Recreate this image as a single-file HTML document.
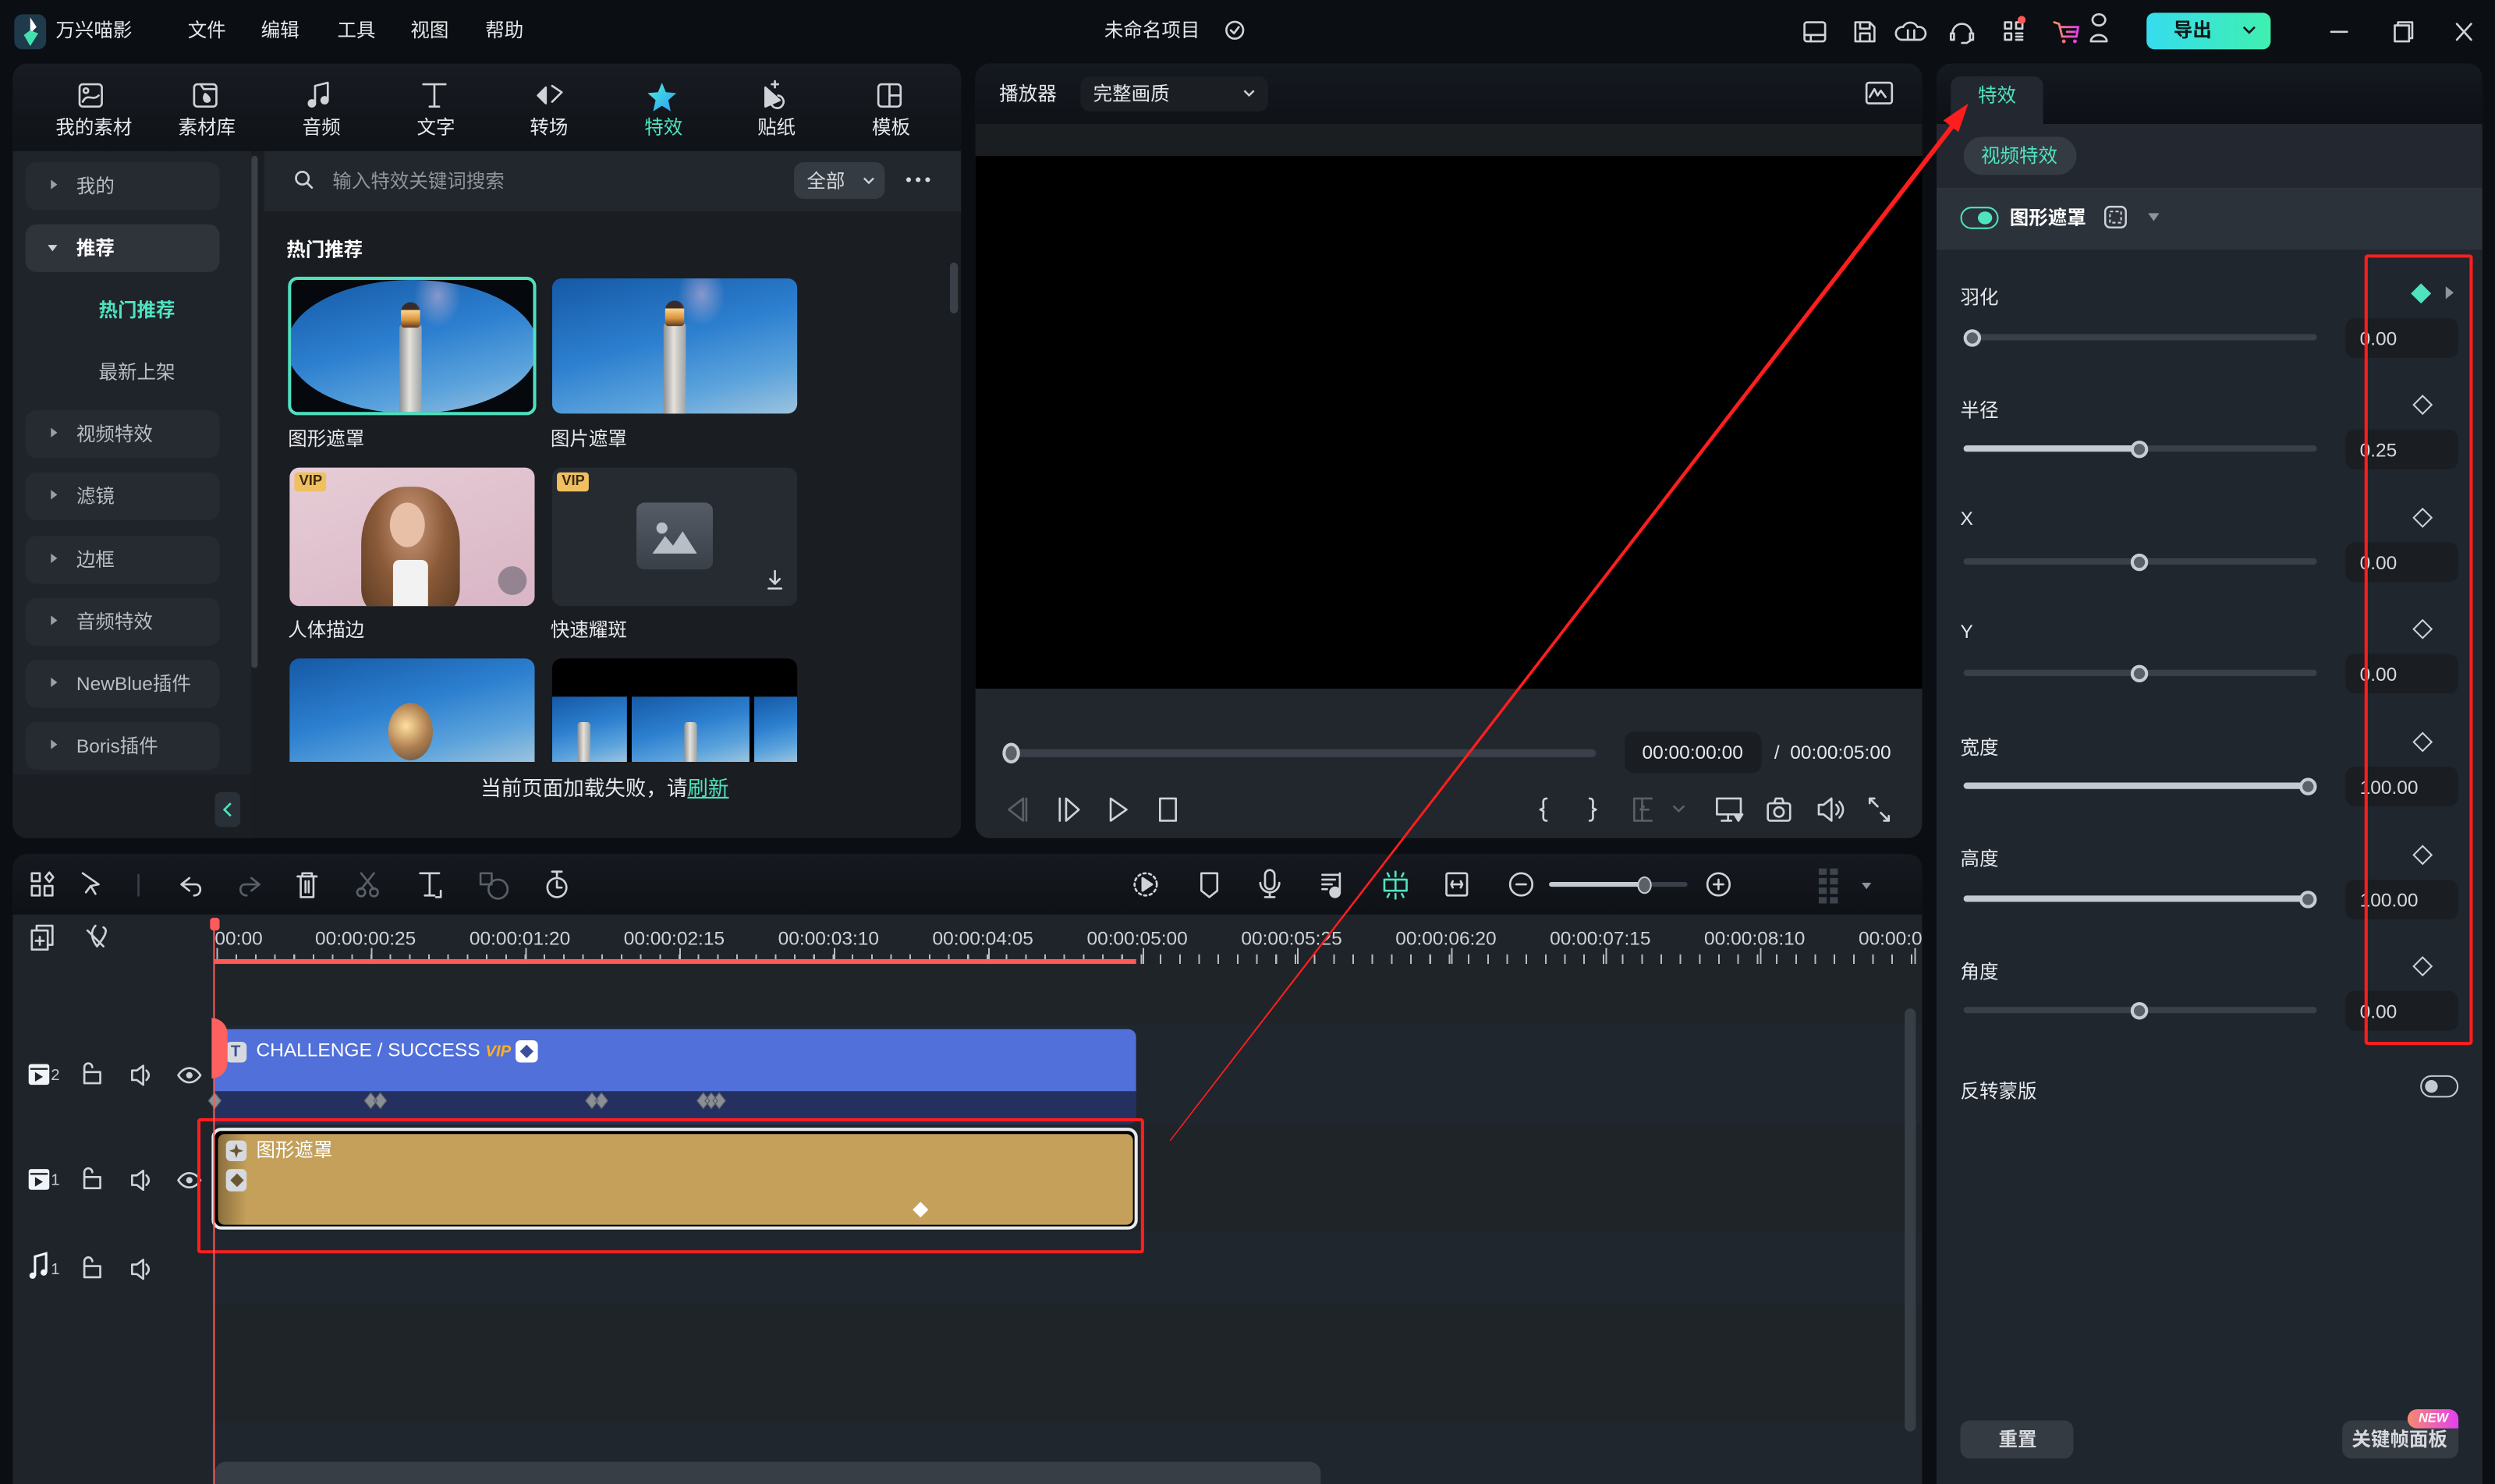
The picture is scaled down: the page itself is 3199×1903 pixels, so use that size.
<!DOCTYPE html>
<html><head><meta charset="utf-8">
<style>
*{margin:0;padding:0;box-sizing:border-box}
html,body{width:3199px;height:1903px;overflow:hidden;background:#0b0e12}
#w{position:absolute;left:0;top:0;width:1568px;height:933px;transform:scale(2.0402,2.0397);transform-origin:0 0;background:#0b0e12;font-family:"Liberation Sans","Noto Sans CJK SC",sans-serif;color:#e6e8eb;font-size:12px}
.a{position:absolute}
.t{position:absolute;white-space:nowrap;line-height:1}
svg{position:absolute;overflow:visible}
.ic{fill:none;stroke:#cfd3d8;stroke-width:1.3;stroke-linecap:round;stroke-linejoin:round}
.side{position:absolute;left:16px;width:122px;height:30px;border-radius:7px;background:#262b32}
.side .t{left:32px;top:9px;color:#b9bec5;font-size:12px}
.side .ar{position:absolute;left:16px;top:11px;width:0;height:0;border-left:4px solid #9aa0a7;border-top:3.5px solid transparent;border-bottom:3.5px solid transparent}
.sky{background:linear-gradient(165deg,#1559a6 0%,#2c7fcf 45%,#5aa2dc 75%,#9cc3de 100%)}
.lh{position:absolute;width:14px;background:linear-gradient(90deg,#8a8f95,#e6e2da 45%,#9da2a6);border-radius:2px 2px 0 0}
.lhtop{position:absolute;width:12px;height:16px;border-radius:6px 6px 2px 2px;background:linear-gradient(180deg,#3a2a2a 0 30%,#ffd890 30%,#d8923a 70%,#5a3a22)}
.lbl{position:absolute;font-size:12px;color:#e6e8eb}
.pl{position:absolute;left:1232px;font-size:12px;color:#e6e8eb}
.trk{position:absolute;left:1234px;width:222px;height:4px;border-radius:2px;background:#3a4049}
.fil{position:absolute;left:0;top:0;height:4px;border-radius:2px;background:#c5cad1}
.knob{position:absolute;width:11px;height:11px;border-radius:50%;background:#5b6169;border:2px solid #c8cdd3;top:-3.5px}
.vb{position:absolute;left:1474px;width:71px;height:25px;border-radius:6px;background:#1a1e23}
.vb .t{left:9px;top:7px;color:#d6d9dd;font-size:12px}
.dia{position:absolute;left:1518px;width:9px;height:9px;border:1.3px solid #cfd3d8;transform:rotate(45deg)}
.rl{position:absolute;top:583px;color:#cfd3d8;font-size:12px}
</style></head><body><div id="w">

<!-- TOP BAR -->
<div class="a" style="left:9px;top:9px;width:20px;height:22px;border-radius:5px;background:#1f3a4a"></div>
<svg style="left:9px;top:9px" width="20" height="22"><path d="M10 2 L14 8 L10 12 Z" fill="#fff"/><path d="M10 10 L15 12 L10 20 L6 13Z" fill="#43e0b0"/></svg>
<div class="t" style="left:35px;top:13px;font-size:12px">万兴喵影</div>
<div class="t" style="left:118px;top:13px">文件</div>
<div class="t" style="left:164px;top:13px">编辑</div>
<div class="t" style="left:212px;top:13px">工具</div>
<div class="t" style="left:258px;top:13px">视图</div>
<div class="t" style="left:305px;top:13px">帮助</div>
<div class="t" style="left:694px;top:13px">未命名项目</div>
<svg style="left:770px;top:13px" width="12" height="12" class="ic"><circle cx="6" cy="6" r="5.3"/><path d="M3.5 6 L5.5 8 L8.5 4"/></svg>
<svg style="left:1133px;top:12px" width="200" height="16" class="ic">
<rect x="1" y="2" width="13" height="12" rx="1.5"/><path d="M1 10 H14 M5 10 V14"/>
<path d="M33 2 H42 L45 5 V14 H33Z M36 2 V6 H42 V2 M36 14 V9 H42 V14"/>
<path d="M68 13 H62 A4 4 0 0 1 63 5 A5 5 0 0 1 72 5 A4 4 0 0 1 74 13 H68 M66 7 V12 M70 7 V12"/>
<path d="M94 9 A6 6 0 0 1 106 9 M93 9 H95 V13 H93Z M105 9 H107 V13 H105Z M106 13 L103 15 H100"/>
<rect x="127" y="2" width="4" height="4"/><rect x="134" y="2" width="4" height="4"/><rect x="127" y="9" width="4" height="4"/><path d="M134 9 H138 M134 11 H138 M134 13 H138"/>
<path d="M186 4 A4 3.5 0 1 1 186.1 4 M181 14 A5 4 0 0 1 191 14 Z"/>
</svg>
<div class="a" style="left:1268px;top:10px;width:5px;height:5px;border-radius:50%;background:#ff5a5a"></div>
<svg style="left:1290px;top:12px" width="18" height="16"><path d="M1 2 L4 3 L6 11 H15 L16 5 H5 M9 8 H14" fill="none" stroke="url(#cg)" stroke-width="1.4" stroke-linecap="round"/><circle cx="7" cy="14" r="1.2" fill="#f07070"/><circle cx="14" cy="14" r="1.2" fill="#e040e0"/><defs><linearGradient id="cg" x1="0" x2="1"><stop offset="0" stop-color="#f4925a"/><stop offset="1" stop-color="#e93cf0"/></linearGradient></defs></svg>
<div class="a" style="left:1349px;top:8px;width:78px;height:23px;border-radius:5px;background:linear-gradient(90deg,#36dcee,#3ff0b0)"></div>
<div class="t" style="left:1366px;top:13px;color:#0d1a1a;font-weight:bold">导出</div>
<svg style="left:1409px;top:16px" width="9" height="6"><path d="M1 1 L4.5 4.5 L8 1" fill="none" stroke="#0d1a1a" stroke-width="1.3"/></svg>
<svg style="left:1464px;top:12px" width="100" height="16" class="ic"><path d="M1 8 H11"/><rect x="41" y="4" width="9" height="10"/><path d="M43 4 V2 H52 V12 H50"/><path d="M80 3 L89 13 M89 3 L80 13"/></svg>

<!-- LEFT PANEL -->
<div class="a" style="left:8px;top:40px;width:596px;height:487px;border-radius:9px;background:#1a1d21;overflow:hidden">
 <div class="a" style="left:0;top:0;width:596px;height:55px;background:linear-gradient(180deg,#181c22,#0f1318)"></div>
 <div class="a" style="left:0;top:55px;width:150px;height:432px;background:#1f242a"></div>
 <div class="a" style="left:158px;top:55px;width:438px;height:38px;background:#22272d"></div>
</div>
<svg style="left:49px;top:51px" width="540" height="18" class="ic">
<rect x="1" y="2" width="14" height="14" rx="2"/><path d="M3 13 C6 7 9 13 13 9"/><circle cx="5" cy="6" r="1.5"/>
<rect x="73" y="2" width="14" height="14" rx="2"/><path d="M77 2 L79 5 H87"/><path d="M80 8 C78 11 80 13 81 13 C83 13 84 11 80 8Z" fill="#cfd3d8"/>
<path d="M149 14 V3 L157 1 V12"/><circle cx="147" cy="14" r="2" fill="#cfd3d8"/><circle cx="155" cy="12" r="2" fill="#cfd3d8"/>
<path d="M217 2 H231 M224 2 V16 M221 16 H227"/>
<path d="M289 9 L294 4 V14Z" fill="#cfd3d8"/><path d="M298 3 L304 7 L298 13"/>
<path d="M432 4 L432 16 L441 12Z" fill="#cfd3d8"/><path d="M440 9 A4 4 0 1 1 436 15"/><path d="M438 0 V4 M436 2 H440"/>
<rect x="503" y="2" width="14" height="14" rx="2"/><path d="M510 2 V16 M510 9 H517"/>
</svg>
<svg style="left:405px;top:51px" width="22" height="20"><path d="M11 1 L13.5 7 L20 7.5 L15 12 L16.5 19 L11 15.5 L5.5 19 L7 12 L2 7.5 L8.5 7Z" fill="url(#sg)"/><defs><linearGradient id="sg" x1="0" y1="0" x2="1" y2="1"><stop offset="0" stop-color="#4ef0d0"/><stop offset="1" stop-color="#2a9bff"/></linearGradient></defs></svg>
<div class="t" style="left:35px;top:74px">我的素材</div>
<div class="t" style="left:112px;top:74px">素材库</div>
<div class="t" style="left:190px;top:74px">音频</div>
<div class="t" style="left:262px;top:74px">文字</div>
<div class="t" style="left:333px;top:74px">转场</div>
<div class="t" style="left:405px;top:74px;color:#4fe3c0">特效</div>
<div class="t" style="left:476px;top:74px">贴纸</div>
<div class="t" style="left:548px;top:74px">模板</div>
<div class="side" style="top:102px"><div class="ar"></div><div class="t">我的</div></div>
<div class="side" style="top:141px;background:#2f343b"><div class="ar" style="left:14px;top:13px;border-left:3.5px solid transparent;border-right:3.5px solid transparent;border-top:4px solid #d0d4d8;border-bottom:0"></div><div class="t" style="color:#fff;font-weight:bold">推荐</div></div>
<div class="t" style="left:62px;top:189px;color:#4fe3c0;font-weight:bold">热门推荐</div>
<div class="t" style="left:62px;top:228px;color:#b9bec5">最新上架</div>
<div class="side" style="top:258px"><div class="ar"></div><div class="t">视频特效</div></div>
<div class="side" style="top:297px"><div class="ar"></div><div class="t">滤镜</div></div>
<div class="side" style="top:337px"><div class="ar"></div><div class="t">边框</div></div>
<div class="side" style="top:376px"><div class="ar"></div><div class="t">音频特效</div></div>
<div class="side" style="top:415px"><div class="ar"></div><div class="t">NewBlue插件</div></div>
<div class="side" style="top:454px"><div class="ar"></div><div class="t">Boris插件</div></div>
<div class="a" style="left:8px;top:487px;width:150px;height:40px;background:#1b1f24;border-radius:0 0 0 9px"></div>
<div class="a" style="left:135px;top:498px;width:16px;height:22px;border-radius:4px;background:#2a3037"></div>
<svg style="left:140px;top:504px" width="6" height="10"><path d="M5 1 L1 5 L5 9" fill="none" stroke="#4fe3c0" stroke-width="1.3"/></svg>
<div class="a" style="left:158px;top:98px;width:4px;height:322px;border-radius:2px;background:#3a4048"></div>
<svg style="left:185px;top:107px" width="12" height="12" class="ic"><circle cx="5" cy="5" r="4"/><path d="M8 8 L11 11"/></svg>
<div class="t" style="left:209px;top:108px;color:#8e949b">输入特效关键词搜索</div>
<div class="a" style="left:499px;top:102px;width:57px;height:23px;border-radius:6px;background:#353b42"></div>
<div class="t" style="left:507px;top:108px;color:#d6d9dd">全部</div>
<svg style="left:542px;top:111px" width="8" height="5"><path d="M1 1 L4 4 L7 1" fill="none" stroke="#cfd3d8" stroke-width="1.2"/></svg>
<svg style="left:569px;top:111px" width="16" height="4"><circle cx="2" cy="2" r="1.5" fill="#d6d9dd"/><circle cx="8" cy="2" r="1.5" fill="#d6d9dd"/><circle cx="14" cy="2" r="1.5" fill="#d6d9dd"/></svg>
<div class="t" style="left:180px;top:151px;font-weight:bold;color:#fff">热门推荐</div>
<div class="a" style="left:597px;top:165px;width:5px;height:32px;border-radius:3px;background:#3a4048"></div>
<!-- cards -->
<div class="a" style="left:181px;top:174px;width:156px;height:87px;border-radius:6px;border:2px solid #4fe0c0;background:#05080c;overflow:hidden">
 <div class="a sky" style="left:-3px;top:0px;width:158px;height:84px;border-radius:50%;overflow:hidden">
  <div class="lh" style="left:71px;top:28px;height:60px"></div><div class="lhtop" style="left:72px;top:14px"></div>
  <div class="a" style="left:80px;top:-10px;width:30px;height:40px;background:radial-gradient(ellipse,rgba(255,200,220,.45),transparent 70%)"></div>
 </div>
</div>
<div class="a sky" style="left:347px;top:175px;width:154px;height:85px;border-radius:6px;overflow:hidden">
 <div class="lh" style="left:70px;top:28px;height:60px"></div><div class="lhtop" style="left:71px;top:14px"></div>
 <div class="a" style="left:79px;top:-10px;width:30px;height:40px;background:radial-gradient(ellipse,rgba(255,200,220,.45),transparent 70%)"></div>
</div>
<div class="lbl" style="left:181px;top:267px">图形遮罩</div>
<div class="lbl" style="left:346px;top:267px">图片遮罩</div>
<div class="a" style="left:182px;top:294px;width:154px;height:87px;border-radius:6px;overflow:hidden;background:linear-gradient(160deg,#e6cdd6,#d9b5c5)">
 <div class="a" style="left:45px;top:12px;width:62px;height:80px;border-radius:45% 45% 20% 20%;background:radial-gradient(ellipse at 50% 30%,#c8987a,#8a5a38 50%,#5a3a22)"></div>
 <div class="a" style="left:63px;top:22px;width:22px;height:28px;border-radius:50%;background:#e8c0a8"></div>
 <div class="a" style="left:65px;top:58px;width:22px;height:30px;background:#f2f2f2;border-radius:4px 4px 0 0"></div>
 <div class="a" style="left:131px;top:62px;width:18px;height:18px;border-radius:50%;background:rgba(90,90,100,.55)"></div>
</div>
<div class="a" style="left:347px;top:294px;width:154px;height:87px;border-radius:6px;background:#262b32;overflow:hidden">
 <div class="a" style="left:53px;top:22px;width:48px;height:42px;border-radius:5px;background:linear-gradient(180deg,#555c66,#3a4048)"></div>
 <svg style="left:62px;top:32px" width="30" height="24"><circle cx="7" cy="6" r="3.5" fill="#b8bec6"/><path d="M1 22 L9 11 L14 17 L20 8 L29 22Z" fill="#b8bec6"/></svg>
 <svg style="left:133px;top:63px" width="14" height="14" class="ic"><path d="M7 2 V10 M4 7 L7 10 L10 7 M3 13 H11"/></svg>
</div>
<div class="a" style="left:185px;top:297px;width:20px;height:12px;border-radius:2px;background:#f0c060"></div><div class="t" style="left:188px;top:298px;font-size:9px;font-weight:bold;color:#3a2a10">VIP</div>
<div class="a" style="left:350px;top:297px;width:20px;height:12px;border-radius:2px;background:#f0c060"></div><div class="t" style="left:353px;top:298px;font-size:9px;font-weight:bold;color:#3a2a10">VIP</div>
<div class="lbl" style="left:181px;top:387px">人体描边</div>
<div class="lbl" style="left:346px;top:387px">快速耀斑</div>
<div class="a sky" style="left:182px;top:414px;width:154px;height:65px;border-radius:6px 6px 0 0;overflow:hidden">
 <div class="a" style="left:62px;top:28px;width:28px;height:36px;border-radius:50%;background:radial-gradient(circle at 40% 40%,#ffe0a0,#b08050 50%,#5a4a40)"></div>
</div>
<div class="a" style="left:347px;top:414px;width:154px;height:65px;border-radius:6px 6px 0 0;background:#000;overflow:hidden">
 <div class="a sky" style="left:0;top:24px;width:47px;height:41px"></div>
 <div class="a sky" style="left:50px;top:24px;width:74px;height:41px"></div>
 <div class="a sky" style="left:127px;top:24px;width:27px;height:41px"></div>
 <div class="lh" style="left:16px;top:40px;width:8px;height:25px"></div>
 <div class="lh" style="left:83px;top:40px;width:8px;height:25px"></div>
</div>
<div class="t" style="left:302px;top:489px;font-size:13px;color:#e6e8eb">当前页面加载失败，请<span style="color:#4fe3c0;text-decoration:underline">刷新</span></div>

<!-- PLAYER -->
<div class="a" style="left:613px;top:40px;width:595px;height:487px;border-radius:9px;background:#22272d;overflow:hidden">
 <div class="a" style="left:0;top:0;width:595px;height:38px;background:linear-gradient(180deg,#151920,#0f1318)"></div>
 <div class="a" style="left:0;top:38px;width:595px;height:20px;background:#1b1e21"></div>
 <div class="a" style="left:0;top:58px;width:595px;height:335px;background:#000"></div>
</div>
<div class="t" style="left:628px;top:53px">播放器</div>
<div class="a" style="left:679px;top:48px;width:118px;height:22px;border-radius:6px;background:#1b1f24"></div>
<div class="t" style="left:687px;top:53px">完整画质</div>
<svg style="left:781px;top:56px" width="8" height="5"><path d="M1 1 L4 4 L7 1" fill="none" stroke="#cfd3d8" stroke-width="1.2"/></svg>
<svg style="left:1172px;top:51px" width="18" height="15" class="ic"><rect x="1" y="1" width="16" height="13" rx="1.5"/><path d="M3 10 L6 5 L8 9 L10 6 L13 10"/></svg>
<div class="a" style="left:636px;top:471px;width:367px;height:5px;border-radius:3px;background:#3a4049"></div>
<div class="a" style="left:630px;top:467px;width:11px;height:13px;border-radius:50%;background:#5b6169;border:2px solid #c8cdd3"></div>
<div class="a" style="left:1021px;top:460px;width:86px;height:26px;border-radius:6px;background:#1a1e23"></div>
<div class="t" style="left:1032px;top:467px;color:#e6e8eb">00:00:00:00</div>
<div class="t" style="left:1115px;top:467px;color:#e6e8eb">/&nbsp; 00:00:05:00</div>
<svg style="left:630px;top:500px" width="570" height="18" class="ic">
<path d="M13 2 L4 9 L13 16Z M15 2 V16" style="stroke:#5a6068"/>
<path d="M36 2 V16 M40 2 L48 9 L40 16Z"/>
<path d="M68 2 L78 9 L68 16Z"/>
<rect x="99" y="2" width="10" height="14"/>
<path d="M342 2 C339 2 340 5 340 8 L338 9 L340 10 C340 13 339 16 342 16"/>
<path d="M369 2 C372 2 371 5 371 8 L373 9 L371 10 C371 13 372 16 369 16"/>
<path d="M397 2 V16 M402 2 V16 M397 2 H408 M397 16 H408 M406 9 H401 L403 7" style="stroke:#5a6068"/>
<path d="M422 7 L425 10 L428 7" style="stroke:#5a6068"/>
<rect x="449" y="2" width="15" height="10"/><path d="M456 12 V16 M452 16 H458"/><path d="M460 12 L465 12 L462.5 16Z" fill="#cfd3d8"/>
<rect x="481" y="5" width="14" height="11" rx="1.5"/><circle cx="488" cy="10.5" r="3"/><path d="M485 5 L486 2 H490 L491 5"/>
<path d="M513 6 H516 L521 2 V16 L516 12 H513Z M524 6 C526 8 526 10 524 12 M526 4 C529 7 529 11 526 14"/>
<path d="M545 2 L550 7 M545 2 V5 M545 2 H548 M557 16 L552 11 M557 16 V13 M557 16 H554"/>
</svg>

<!-- RIGHT PANEL -->
<div class="a" style="left:1217px;top:40px;width:343px;height:893px;border-radius:9px 9px 0 0;background:#20262e;overflow:hidden">
 <div class="a" style="left:0;top:0;width:343px;height:38px;background:linear-gradient(180deg,#151920,#0d1116)"></div>
 <div class="a" style="left:9px;top:8px;width:58px;height:32px;border-radius:6px 6px 0 0;background:#232830"></div>
 <div class="a" style="left:0;top:38px;width:343px;height:40px;background:#232830"></div>
 <div class="a" style="left:0;top:78px;width:343px;height:39px;background:#2c323a"></div>
</div>
<div class="t" style="left:1243px;top:54px;color:#4fe3c0">特效</div>
<div class="a" style="left:1234px;top:86px;width:71px;height:24px;border-radius:12px;background:#353b43"></div>
<div class="t" style="left:1245px;top:92px;color:#4fe3c0">视频特效</div>
<div class="a" style="left:1232px;top:130px;width:24px;height:14px;border-radius:7px;border:1.5px solid #4fe3c0"></div>
<div class="a" style="left:1243px;top:133px;width:9px;height:8px;border-radius:50%;background:#4fe3c0"></div>
<div class="t" style="left:1263px;top:131px;font-weight:bold;color:#fff">图形遮罩</div>
<svg style="left:1322px;top:129px" width="16" height="16"><rect x="1" y="1" width="13" height="13" rx="3" fill="none" stroke="#cfd3d8" stroke-width="1.2"/><rect x="4" y="4" width="7" height="7" fill="none" stroke="#cfd3d8" stroke-width="1" stroke-dasharray="2 1.5"/></svg>
<svg style="left:1350px;top:134px" width="7" height="5"><path d="M0 0 H7 L3.5 5Z" fill="#8e949b"/></svg>

<div class="pl" style="top:178px">羽化</div>
<div class="a" style="left:1517px;top:180px;width:9px;height:9px;background:#4fe3c0;transform:rotate(45deg)"></div>
<svg style="left:1537px;top:180px" width="5" height="8"><path d="M0 0 L5 4 L0 8Z" fill="#8e949b"/></svg>
<div class="trk" style="top:210px"><div class="knob" style="left:0px"></div></div>
<div class="vb" style="top:200px"><div class="t">0.00</div></div>

<div class="pl" style="top:249px">半径</div><div class="dia" style="top:250px"></div>
<div class="trk" style="top:280px"><div class="fil" style="width:111px"></div><div class="knob" style="left:105px"></div></div>
<div class="vb" style="top:270px"><div class="t">0.25</div></div>

<div class="pl" style="top:319px">X</div><div class="dia" style="top:321px"></div>
<div class="trk" style="top:351px"><div class="knob" style="left:105px"></div></div>
<div class="vb" style="top:341px"><div class="t">0.00</div></div>

<div class="pl" style="top:390px">Y</div><div class="dia" style="top:391px"></div>
<div class="trk" style="top:421px"><div class="knob" style="left:105px"></div></div>
<div class="vb" style="top:411px"><div class="t">0.00</div></div>

<div class="pl" style="top:461px">宽度</div><div class="dia" style="top:462px"></div>
<div class="trk" style="top:492px"><div class="fil" style="width:217px"></div><div class="knob" style="left:211px"></div></div>
<div class="vb" style="top:482px"><div class="t">100.00</div></div>

<div class="pl" style="top:531px">高度</div><div class="dia" style="top:533px"></div>
<div class="trk" style="top:563px"><div class="fil" style="width:217px"></div><div class="knob" style="left:211px"></div></div>
<div class="vb" style="top:553px"><div class="t">100.00</div></div>

<div class="pl" style="top:602px">角度</div><div class="dia" style="top:603px"></div>
<div class="trk" style="top:633px"><div class="knob" style="left:105px"></div></div>
<div class="vb" style="top:623px"><div class="t">0.00</div></div>

<div class="a" style="left:1486px;top:160px;width:68px;height:497px;border:2.5px solid #ff1e1e;border-radius:2px"></div>

<div class="pl" style="top:677px">反转蒙版</div>
<div class="a" style="left:1521px;top:676px;width:24px;height:14px;border-radius:7px;border:1.5px solid #c5cad1"></div>
<div class="a" style="left:1524px;top:679px;width:8px;height:8px;border-radius:50%;background:#c5cad1"></div>

<div class="a" style="left:1232px;top:893px;width:71px;height:24px;border-radius:6px;background:#353b43"></div>
<div class="t" style="left:1256px;top:899px;font-weight:bold;color:#d6d9dd">重置</div>
<div class="a" style="left:1472px;top:893px;width:73px;height:24px;border-radius:6px;background:#353b43"></div>
<div class="t" style="left:1478px;top:899px;font-weight:bold;color:#d6d9dd">关键帧面板</div>
<div class="a" style="left:1513px;top:886px;width:32px;height:12px;border-radius:6px 6px 0 6px;background:linear-gradient(90deg,#f58a70,#e440f0)"></div>
<div class="t" style="left:1520px;top:888px;font-size:8px;font-weight:bold;font-style:italic;color:#fff">NEW</div>

<!-- TIMELINE -->
<div class="a" style="left:8px;top:537px;width:1200px;height:396px;border-radius:9px 9px 0 0;background:#20262d;overflow:hidden">
 <div class="a" style="left:0;top:0;width:1200px;height:38px;background:linear-gradient(180deg,#161a20,#0e1217)"></div>
 <div class="a" style="left:0;top:38px;width:1200px;height:32px;background:#1f242a"></div>
 <div class="a" style="left:0;top:70px;width:1200px;height:37px;background:#1e2428"></div>
 <div class="a" style="left:0;top:107px;width:1200px;height:63px;background:#20262d"></div>
 <div class="a" style="left:0;top:170px;width:1200px;height:68px;background:#1e2428"></div>
 <div class="a" style="left:0;top:238px;width:1200px;height:45px;background:#20262d"></div>
 <div class="a" style="left:0;top:283px;width:1200px;height:74px;background:#1e2428"></div>
 <div class="a" style="left:0;top:357px;width:1200px;height:39px;background:#20262d"></div>
 <div class="a" style="left:0;top:70px;width:125px;height:326px;background:#1f242a"></div>
</div>
<svg style="left:19px;top:547px" width="1170" height="20" class="ic">
<rect x="1" y="2" width="5" height="5"/><path d="M12 1.5 L14.5 4.5 L12 7.5 L9.5 4.5Z"/><rect x="1" y="10" width="5" height="6"/><rect x="9" y="10" width="5" height="6"/>
<path d="M33 2 L43 9 L38 10 L41 15 M38 10 L35 14Z"/>
<path d="M68 3 V16" style="stroke:#3a4048"/>
<path d="M100 5 L95 9 L100 13 M95 9 H104 C108 9 108 16 103 16"/>
<path d="M139 5 L144 9 L139 13 M144 9 H135 C131 9 131 16 136 16" style="stroke:#5a6068"/>
<path d="M168 4 H180 M171 4 V2 H177 V4 M170 4 V17 H178 V4 M173 7 V14 M175 7 V14"/>
<path d="M208 2 L216 12 M216 2 L208 12" style="stroke:#5a6068"/><circle cx="208" cy="14" r="2.5" style="stroke:#5a6068"/><circle cx="216" cy="14" r="2.5" style="stroke:#5a6068"/>
<path d="M245 2 H257 M251 2 V16 M248 16 H254 M258 13 L258 17 L255 17"/>
<rect x="283" y="2" width="7" height="7" style="stroke:#5a6068"/><circle cx="294" cy="12" r="6" style="stroke:#5a6068"/>
<circle cx="331" cy="11" r="6"/><path d="M331 4 V1 M328 1 H334 M331 7 V11 H334"/>
<circle cx="701" cy="9" r="7" stroke-dasharray="1.5 2"/><path d="M699 5 L705 9 L699 13Z" fill="#cfd3d8"/>
<path d="M736 2 H746 V13 L741 17 L736 13Z"/>
<path d="M776 3 A3 3 0 0 1 782 3 V9 A3 3 0 0 1 776 9Z M773 8 A6 6 0 0 0 785 8 M779 14 V17 M776 17 H782"/>
<path d="M812 3 H822 M812 6 H820 M812 9 H818 M812 12 H815 M823 2 V13"/><circle cx="820" cy="14" r="3" fill="#cfd3d8"/>
<g style="stroke:#4fe3c0"><rect x="851" y="6" width="14" height="7"/><path d="M858 6 V13 M858 1 V4 M858 15 V18 M853 2 L854 4 M863 2 L862 4 M853 17 L854 15 M863 17 L862 15"/></g>
<rect x="890" y="2" width="13" height="14" rx="1"/><path d="M893 9 H900 M894 7 L893 9 L894 11 M899 7 L900 9 L899 11"/>
<circle cx="937" cy="9" r="7"/><path d="M934 9 H940"/>
<path d="M956 9 H1012" style="stroke:#c5cad1;stroke-width:3"/><path d="M1018 9 H1040" style="stroke:#3a4049;stroke-width:3"/>
<circle cx="1061" cy="9" r="7"/><path d="M1058 9 H1064 M1061 6 V12"/>
</svg>
<div class="a" style="left:1029px;top:551px;width:9px;height:11px;border-radius:50%;background:#5b6169;border:1.5px solid #c8cdd3"></div>
<svg style="left:1142px;top:545px" width="40" height="24"><g fill="#3d444c"><rect x="1" y="1" width="5" height="4"/><rect x="8" y="1" width="5" height="4"/><rect x="1" y="7" width="5" height="4"/><rect x="8" y="7" width="5" height="4"/><rect x="1" y="13" width="5" height="4"/><rect x="8" y="13" width="5" height="4"/><rect x="1" y="19" width="5" height="4"/><rect x="8" y="19" width="5" height="4"/></g><path d="M28 10 H34 L31 14Z" fill="#8e949b"/></svg>
<svg style="left:19px;top:581px" width="60" height="18" class="ic"><rect x="1" y="4" width="10" height="12"/><path d="M4 4 V1 H14 V13 H11 M6 8 V13 M3.5 10.5 H8.5"/><path d="M46 2 C50 4 45 10 42 14 M36 4 L46 14 M41 1 C38 4 38 9 42 14" /></svg>
<div class="a" style="left:136px;top:596px;width:1072px;height:10px;background:repeating-linear-gradient(90deg,#b8bdc3 0 1px,transparent 1px 12.1px);clip-path:inset(4px 0 0 0)"></div>
<div class="a" style="left:136px;top:596px;width:1072px;height:10px;background:repeating-linear-gradient(90deg,#b8bdc3 0 1px,transparent 1px 97px)"></div>
<div class="rl" style="left:135px">00:00</div>
<div class="rl" style="left:198px">00:00:00:25</div>
<div class="rl" style="left:295px">00:00:01:20</div>
<div class="rl" style="left:392px">00:00:02:15</div>
<div class="rl" style="left:489px">00:00:03:10</div>
<div class="rl" style="left:586px">00:00:04:05</div>
<div class="rl" style="left:683px">00:00:05:00</div>
<div class="rl" style="left:780px">00:00:05:25</div>
<div class="rl" style="left:877px">00:00:06:20</div>
<div class="rl" style="left:974px">00:00:07:15</div>
<div class="rl" style="left:1071px">00:00:08:10</div>
<div class="rl" style="left:1168px">00:00:0</div>
<div class="a" style="left:135px;top:603px;width:579px;height:3px;background:#ff5a5a"></div>
<svg style="left:16px;top:666px" width="120" height="140">
<g fill="#f0f4f8"><rect x="2" y="3" width="13" height="13" rx="1.5"/><rect x="2" y="69" width="13" height="13" rx="1.5"/></g>
<path d="M6 8 L11 11 L6 14Z M6 74 L11 77 L6 80Z" fill="#1f242a"/>
<path d="M3 6 H14 M3 72 H14" stroke="#1f242a" stroke-width="1.2"/>
<text x="16" y="13" font-size="10" fill="#c5cad1" font-family="Liberation Sans">2</text>
<text x="16" y="79" font-size="10" fill="#c5cad1" font-family="Liberation Sans">1</text>
<text x="16" y="135" font-size="10" fill="#c5cad1" font-family="Liberation Sans">1</text>
<path d="M6 136 V124 L13 122 V134" fill="none" stroke="#f0f4f8" stroke-width="1.5"/><circle cx="4.5" cy="136" r="2" fill="#f0f4f8"/><circle cx="11.5" cy="134" r="2" fill="#f0f4f8"/>
<g class="ic">
<path d="M37 8 H47 V15 H37Z M37 8 V5 A2.5 2.5 0 0 1 42 5"/><path d="M37 74 H47 V81 H37Z M37 74 V71 A2.5 2.5 0 0 1 42 71"/><path d="M37 130 H47 V137 H37Z M37 130 V127 A2.5 2.5 0 0 1 42 127"/>
<path d="M67 7 H70 L74 4 V16 L70 13 H67Z M76 7 C78 9 78 11 76 13"/><path d="M67 73 H70 L74 70 V82 L70 79 H67Z M76 73 C78 75 78 77 76 79"/><path d="M67 129 H70 L74 126 V138 L70 135 H67Z M76 129 C78 131 78 133 76 135"/>
<path d="M96 10 C100 4 106 4 110 10 C106 16 100 16 96 10Z M96 76 C100 70 106 70 110 76 C106 82 100 82 96 76Z"/>
</g>
<circle cx="103" cy="10" r="2" fill="#cfd3d8"/><circle cx="103" cy="76" r="2" fill="#cfd3d8"/>
</svg>
<div class="a" style="left:135px;top:647px;width:579px;height:60px;border-radius:0 5px 5px 0;background:#243060;overflow:hidden"><div class="a" style="left:0;top:0;width:579px;height:39px;background:#5170d9"></div></div>
<div class="a" style="left:142px;top:655px;width:13px;height:13px;border-radius:3px;background:#d6d9dd"></div><div class="t" style="left:145px;top:657px;font-size:10px;font-weight:bold;color:#3b4e9a">T</div>
<div class="t" style="left:161px;top:654px;color:#fff">CHALLENGE / SUCCESS <span style="color:#ffb020;font-style:italic;font-weight:bold;font-size:10px">VIP</span></div>
<div class="a" style="left:324px;top:654px;width:14px;height:14px;border-radius:3px;background:#fff"></div>
<div class="a" style="left:328px;top:658px;width:6px;height:6px;background:#3b4e9a;transform:rotate(45deg)"></div>
<svg style="left:130px;top:685px" width="340" height="14" fill="#8a8f96" stroke="#5a5f66" stroke-width=".6"><path d="M5 2 L9 7 L5 12 L1 7Z"/><path d="M103 2 L107 7 L103 12 L99 7Z M109 2 L113 7 L109 12 L105 7Z M242 2 L246 7 L242 12 L238 7Z M248 2 L252 7 L248 12 L244 7Z M312 2 L316 7 L312 12 L308 7Z M317 2 L321 7 L317 12 L313 7Z M322 2 L326 7 L322 12 L318 7Z"/></svg>
<div class="a" style="left:133px;top:709px;width:582px;height:64px;border-radius:6px;border:2px solid #e8eaed;background:#000;padding:1.5px"><div style="width:100%;height:100%;border-radius:4px;background:linear-gradient(90deg,#8a6e3e,#c4a05a 18px,#c4a05a)"></div></div>
<div class="a" style="left:142px;top:717px;width:13px;height:13px;border-radius:3px;background:#d6d9dd"></div>
<svg style="left:142px;top:717px" width="13" height="13"><path d="M6.5 2 L8 6.5 L6.5 11 L5 6.5Z M2 6.5 L6.5 5 L11 6.5 L6.5 8Z" fill="#6a5632"/></svg>
<div class="t" style="left:161px;top:717px;color:#fff">图形遮罩</div>
<div class="a" style="left:142px;top:735px;width:13px;height:14px;border-radius:3px;background:#d6d9dd"></div>
<div class="a" style="left:145.5px;top:739px;width:6px;height:6px;background:#6a5632;transform:rotate(45deg)"></div>
<div class="a" style="left:575px;top:757px;width:7px;height:7px;background:#fff;transform:rotate(45deg)"></div>
<div class="a" style="left:124px;top:703px;width:595px;height:85px;border:2.5px solid #ff1e1e;border-radius:2px"></div>
<div class="a" style="left:134px;top:578px;width:1px;height:355px;background:#ff5a5a"></div>
<div class="a" style="left:132px;top:577px;width:6px;height:8px;border-radius:2px;background:#ff5a5a"></div>
<div class="a" style="left:133px;top:640px;width:10px;height:38px;border-radius:0 10px 10px 0;background:#ff6060"></div>
<div class="a" style="left:1197px;top:634px;width:7px;height:266px;border-radius:4px;background:#373e46"></div>
<div class="a" style="left:135px;top:919px;width:695px;height:14px;border-radius:7px 7px 0 0;background:#373e46"></div>

<svg style="left:0;top:0" width="1568" height="933"><polygon points="735,717 735.6,717.4 1229.2,78.9 1226.8,77.1" fill="#ff1e1e"/><polygon points="1237,65 1230.8,83 1221.3,75.7" fill="#ff1e1e"/></svg>

</div></body></html>
